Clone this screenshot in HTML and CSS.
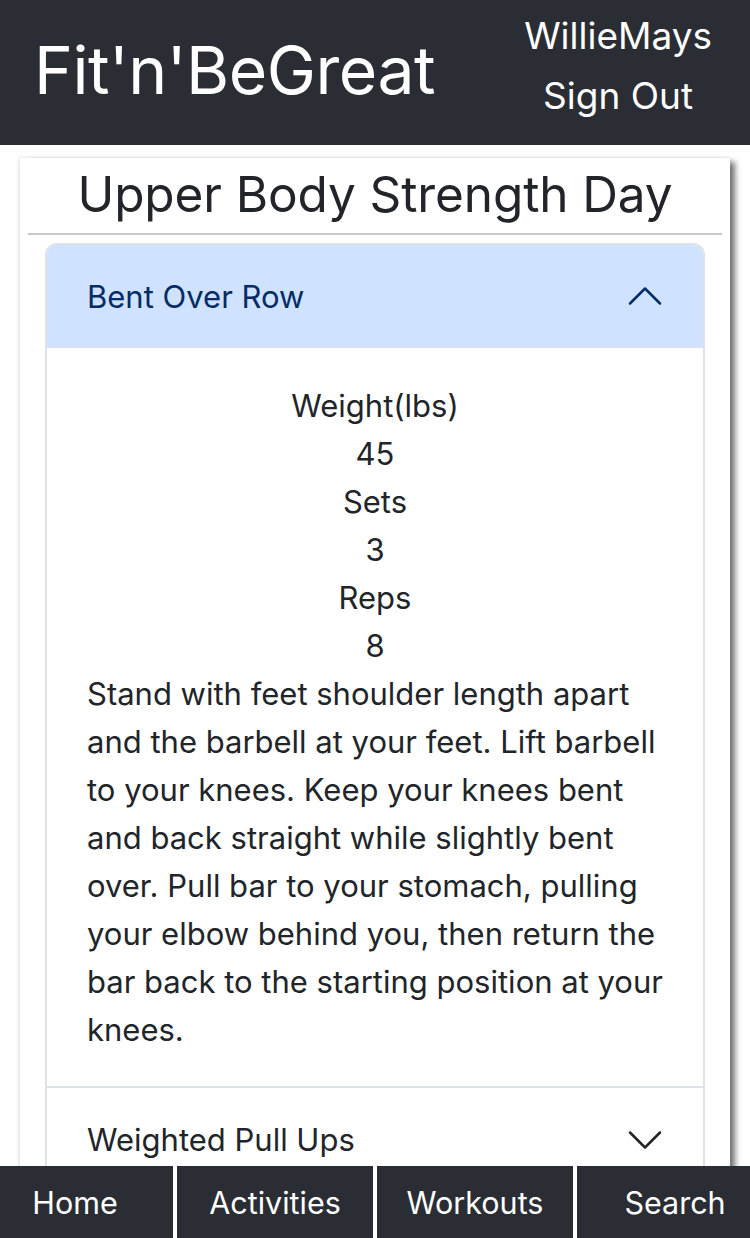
FILE: index.html
```html
<!DOCTYPE html>
<html lang="en">
<head>
<meta charset="utf-8">
<title>Fit'n'BeGreat</title>
<link rel="stylesheet" href="styles.css">
</head>
<body>
<header class="topbar">
  <div class="brand">Fit'n'BeGreat</div>
  <div class="user">
    <div class="user-name">WillieMays</div>
    <div class="user-signout">Sign Out</div>
  </div>
</header>

<main class="card">
  <h2 class="card-title">Upper Body Strength Day</h2>
  <hr class="divider">
  <div class="accordion">
    <div class="acc-item">
      <div class="acc-header active">
        <span>Bent Over Row</span>
        <svg class="chev up" viewBox="0 0 16 16" width="40" height="40"><path fill="none" stroke="currentColor" stroke-width="1" stroke-linecap="round" stroke-linejoin="round" d="M2 5l6 6 6-6"/></svg>
      </div>
      <div class="acc-body">
        <div class="stat">Weight(lbs)</div>
        <div class="stat">45</div>
        <div class="stat">Sets</div>
        <div class="stat">3</div>
        <div class="stat">Reps</div>
        <div class="stat">8</div>
        <p class="desc">Stand with feet shoulder length apart and the barbell at your feet. Lift barbell to your knees. Keep your knees bent and back straight while slightly bent over. Pull bar to your stomach, pulling your elbow behind you, then return the bar back to the starting position at your knees.</p>
      </div>
    </div>
    <div class="acc-item">
      <div class="acc-header">
        <span>Weighted Pull Ups</span>
        <svg class="chev" viewBox="0 0 16 16" width="40" height="40"><path fill="none" stroke="currentColor" stroke-width="1" stroke-linecap="round" stroke-linejoin="round" d="M2 5l6 6 6-6"/></svg>
      </div>
    </div>
  </div>
</main>

<nav class="bottombar">
  <a class="nav-btn">Home</a>
  <a class="nav-btn">Activities</a>
  <a class="nav-btn">Workouts</a>
  <a class="nav-btn">Search</a>
</nav>
</body>
</html>
```

FILE: styles.css
```css
* { box-sizing: border-box; }
html, body { margin: 0; padding: 0; }
body {
  font-family: Inter, "Noto Sans", sans-serif;
  color: #212529;
  background: #fff;
  width: 750px;
  height: 1238px;
  overflow: hidden;
}
.topbar {
  height: 145px;
  background: #2a2d34;
  color: #fff;
  display: flex;
  justify-content: space-between;
  align-items: flex-start;
}
.brand {
  font-size: 66px;
  line-height: 140px;
  padding-left: 34px;
  letter-spacing: -0.5px;
}
.user {
  padding-top: 6px;
  padding-right: 38px;
  text-align: center;
  font-size: 37px;
  line-height: 60px;
}
.card {
  margin: 13px 20px 0 20px;
  background: #fff;
  box-shadow: 5px 4px 6px rgba(0,0,0,0.55), -1px 0 4px rgba(0,0,0,0.12);
  padding: 0 8px;
  height: 1100px;
}
.card-title {
  margin: 0;
  font-weight: 400;
  font-size: 49.5px;
  line-height: 72px;
  text-align: center;
  letter-spacing: -0.1px;
}
.divider {
  margin: 3px 0 8px 0;
  border: 0;
  border-top: 2px solid #c8c8c8;
}
.accordion {
  margin: 0 17px;
  border: 2px solid #dee2e6;
  border-radius: 12px 12px 0 0;
  overflow: hidden;
}
.acc-item + .acc-item { border-top: 2px solid #dee2e6; }
.acc-header {
  height: 103px;
  display: flex;
  align-items: center;
  justify-content: space-between;
  padding: 0 38px 0 40px;
  font-size: 31px;
  color: #212529;
  background: #fff;
}
.acc-header.active {
  background: #cfe2ff;
  color: #052c65;
  border-bottom: 1px solid #dee2e6;
}
.chev { display: block; }
.chev.up { transform: rotate(180deg); }
.acc-body {
  padding: 34px 37px 32px 40px;
  font-size: 31px;
  line-height: 48px;
}
.stat { text-align: center; margin-right: 3px; }
.desc { margin: 0; }
.bottombar {
  position: fixed;
  bottom: 0;
  left: -23px;
  width: 796px;
  height: 72px;
  display: flex;
  gap: 4px;
  background: #fff;
}
.nav-btn {
  flex: 1;
  background: #2a2d34;
  color: #fff;
  font-size: 30.5px;
  display: flex;
  align-items: center;
  justify-content: center;
  text-decoration: none;
}
```
